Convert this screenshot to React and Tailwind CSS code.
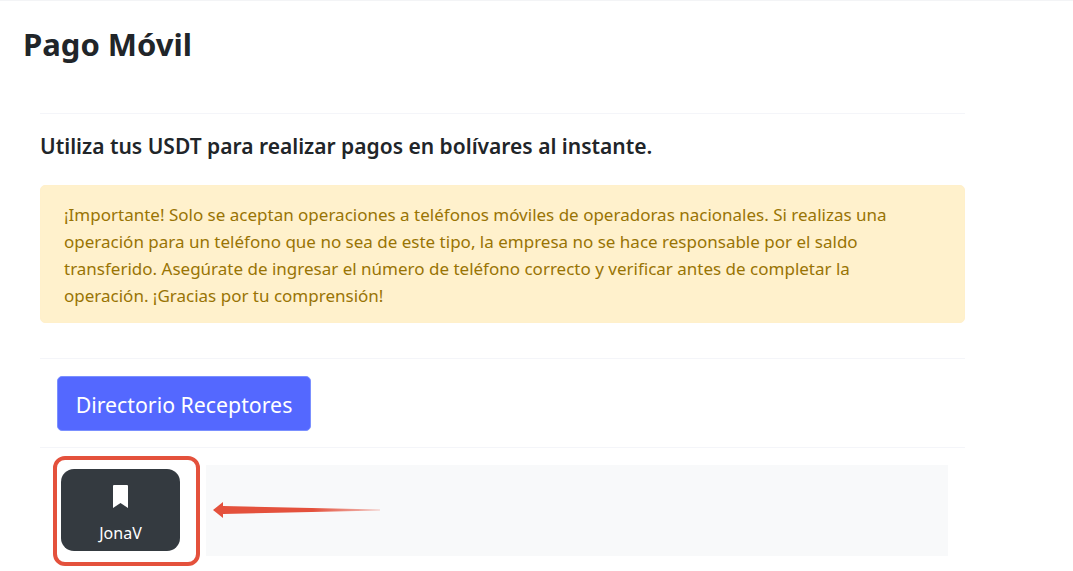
const sans = "font-['Noto_Sans','Open_Sans',sans-serif]";

export default function App() {
  return (
    <div className={`relative h-[571px] w-[1073px] overflow-hidden border-t border-[#f3f4f6] bg-white ${sans}`}>
      <h1 className="ml-[23px] mt-5 text-[31px] leading-[46px] font-bold text-[#212529]">Pago Móvil</h1>

      <div className="ml-10 mt-[46px] w-[925px]">
        <hr className="border-[#f4f5f9]" />
        <h2 className="mt-[18px] text-[21px] leading-[28px] font-semibold text-[#212529]">
          Utiliza tus USDT para realizar pagos en bolívares al instante.
        </h2>

        <div className="mt-[25px] h-[138px] rounded-[5px] border border-[#fff0cb] bg-[#fff1cc] pl-[23px] pr-[50px] pt-[15px] text-[17px] leading-[27px] text-[#997404]">
          ¡Importante! Solo se aceptan operaciones a teléfonos móviles de operadoras nacionales. Si realizas una operación para un teléfono que no sea de este tipo, la empresa no se hace responsable por el saldo transferido. Asegúrate de ingresar el número de teléfono correcto y verificar antes de completar la operación. ¡Gracias por tu comprensión!
        </div>

        <hr className="mt-[35px] border-[#f4f5f9]" />
        <div className="pl-[17px] pt-[17px]">
          <button className="h-[55px] w-[254px] rounded-[5px] border border-[#7b90ff] bg-[#5468ff] pt-0.5 text-[21.3px] text-white">
            Directorio Receptores
          </button>
        </div>
        <hr className="mt-4 border-[#f4f5f9]" />

        <div className="ml-[21px] mt-[21px] flex">
          <div className="flex h-[82px] w-[119px] shrink-0 flex-col items-center rounded-[13px] bg-[#343a40] text-white">
            <svg className="mt-4" width="15" height="24" viewBox="0 0 15 24">
              <path d="M1 0 H14 a1 1 0 0 1 1 1 V23 L7.5 18 L0 23 V1 a1 1 0 0 1 1-1 Z" fill="white" />
            </svg>
            <span className="mt-3.5 text-[16px] leading-[20px]">JonaV</span>
          </div>
          <div className="ml-[26px] -mt-1 h-[91px] w-[742px] bg-[#f8f9fa]" />
        </div>
      </div>

      {/* annotation box and arrow on top of the screenshot */}
      <div className="absolute left-[53px] top-[455px] h-[110px] w-[147px] rounded-[12px] border-4 border-[#e4513c]" />
      <svg className="absolute left-[212px] top-[498px]" width="170" height="24" viewBox="0 0 170 24">
        <defs>
          <linearGradient id="fade" x1="0" x2="1" y1="0" y2="0">
            <stop offset="0.6" stopColor="#e4513c" />
            <stop offset="1" stopColor="#e4513c" stopOpacity="0.3" />
          </linearGradient>
        </defs>
        <path d="M1 11 L11 3 L11 7 L168 10.5 L168 11.5 L11 15 L11 19 Z" fill="url(#fade)" />
      </svg>
    </div>
  );
}
